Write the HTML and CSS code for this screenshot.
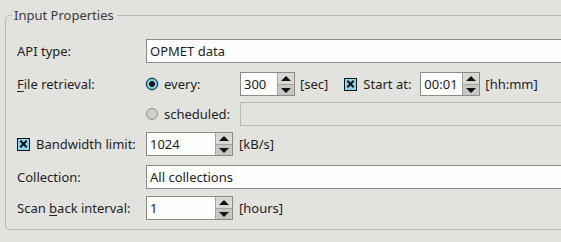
FILE: index.html
```html
<!DOCTYPE html>
<html lang="en">
<head>
    <meta charset="UTF-8">
    <title>Input Properties</title>
    <link rel="stylesheet" href="styles.css">
</head>
<body>
    <fieldset class="group">
        <legend>Input Properties</legend>

        <div class="row r-api">
            <span class="lbl">API type:</span>
            <div class="field">OPMET data</div>
        </div>

        <div class="row r-every">
            <span class="lbl"><u>F</u>ile retrieval:</span>
            <span class="radio on"></span>
            <span class="opt">every:</span>
            <div class="spin w-sec">
                <span class="val">300</span>
                <span class="btns"><i class="up"></i><i class="down"></i></span>
            </div>
            <span class="unit">[sec]</span>
            <span class="check gap-start"></span>
            <span class="chk-lbl">Start at:</span>
            <div class="spin w-time">
                <span class="val">00:01</span>
                <span class="btns"><i class="up"></i><i class="down"></i></span>
            </div>
            <span class="unit">[hh:mm]</span>
        </div>

        <div class="row r-sched">
            <span class="lbl"></span>
            <span class="radio"></span>
            <span class="opt">scheduled:</span>
            <div class="field disabled"></div>
        </div>

        <div class="row r-bw">
            <span class="lbl lbl-check"><span class="check"></span><span class="chk-text">Bandwidth limit:</span></span>
            <div class="spin w-num">
                <span class="val">1024</span>
                <span class="btns"><i class="up"></i><i class="down"></i></span>
            </div>
            <span class="unit wide-gap">[kB/s]</span>
        </div>

        <div class="row r-coll">
            <span class="lbl">Collection:</span>
            <div class="field">All collections</div>
        </div>

        <div class="row r-scan">
            <span class="lbl">Scan <u>b</u>ack interval:</span>
            <div class="spin w-num">
                <span class="val">1</span>
                <span class="btns"><i class="up"></i><i class="down"></i></span>
            </div>
            <span class="unit wide-gap">[hours]</span>
        </div>
    </fieldset>
</body>
</html>
```

FILE: styles.css
```css
body {
    margin: 0;
    background-color: #e2e2de;
    font-family: "Noto Sans", "Open Sans", sans-serif;
    font-size: 13px;
    color: #1f1f1f;
    overflow: hidden;
    width: 561px;
    height: 242px;
}
.group {
    margin: 6px 0 0 5px;
    padding: 0 0 9px 11px;
    width: 620px;
    border: 1px solid #b9b9b5;
    border-radius: 4px;
}
.group legend {
    margin-left: -5px;
    padding: 0 3px 0 2px;
    color: #3c3c3c;
    line-height: 18px;
}
.row {
    display: flex;
    align-items: center;
    height: 24px;
}
.r-api { margin-top: 15px; }
.r-every { margin-top: 9px; }
.r-sched { margin-top: 6px; }
.r-bw { margin-top: 6px; }
.r-coll { margin-top: 9px; }
.r-scan { margin-top: 7px; }
.lbl {
    width: 129px;
    flex: none;
    white-space: pre;
}
.lbl-check {
    display: flex;
    align-items: center;
}
u {
    text-decoration-thickness: 1px;
    text-underline-offset: 2px;
}
.field {
    flex: 1;
    height: 22px;
    line-height: 22px;
    padding-left: 3px;
    background-color: #fdfdfb;
    border: 1px solid #8b8b89;
}
.field.disabled {
    background-color: transparent;
    border-color: #b9b9b5;
}
.opt {
    width: 76px;
    flex: none;
}
.radio {
    width: 10px;
    height: 10px;
    margin-right: 6px;
    border-radius: 50%;
    border: 1px solid #8e8e8c;
    background-color: #cfcfcb;
    flex: none;
}
.radio.on {
    border: 1px solid #111;
    background: radial-gradient(circle, #111 0, #111 2.6px, #8ad6ef 3.2px);
    box-shadow: 0 0 0 1px #8ad6ef;
}
.check {
    position: relative;
    width: 11px;
    height: 11px;
    border: 1px solid #111;
    background-color: #8ad6ef;
    flex: none;
}
.check::before, .check::after {
    content: "";
    position: absolute;
    left: 1px;
    top: 4.5px;
    width: 9px;
    height: 2px;
    background-color: #111;
    transform: rotate(45deg);
}
.check::after {
    transform: rotate(-45deg);
}
.chk-text {
    margin-left: 6px;
}
.gap-start {
    margin-left: 16px;
}
.chk-lbl {
    width: 57px;
    margin-left: 6px;
    flex: none;
}
.spin {
    display: flex;
    height: 22px;
    border: 1px solid #8b8b89;
    background-color: #fdfdfb;
    flex: none;
}
.w-sec { width: 53px; }
.w-time { width: 58px; }
.w-num { width: 85px; }
.spin .val {
    flex: 1;
    line-height: 22px;
    padding-left: 3px;
}
.btns {
    width: 16px;
    display: flex;
    flex-direction: column;
    border-left: 1px solid #a4a4a0;
}
.btns i {
    flex: 1;
    position: relative;
    background-color: #d8d8d4;
}
.btns i.down {
    background-color: #c6c6c2;
    border-top: 1px solid #a4a4a0;
}
.btns i::after {
    content: "";
    position: absolute;
    left: 3px;
    top: 3px;
    border-left: 5px solid transparent;
    border-right: 5px solid transparent;
}
.btns i.up::after {
    border-bottom: 5px solid #111;
}
.btns i.down::after {
    border-top: 5px solid #111;
}
.unit {
    margin-left: 5px;
}
.unit.wide-gap {
    margin-left: 6px;
}
```
